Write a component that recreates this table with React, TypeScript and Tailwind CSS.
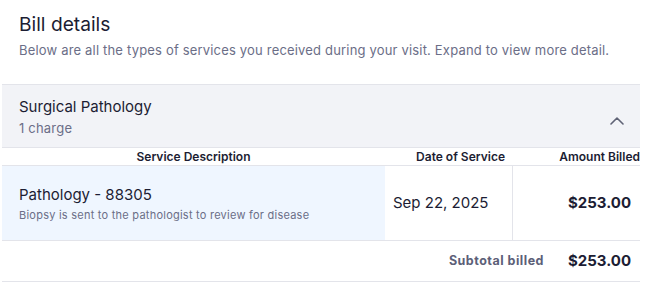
import React from "react";

function ChevronUp() {
  return (
    <svg width="14" height="8" viewBox="0 0 14 8" fill="none" aria-hidden="true">
      <path d="M1 7 L7 1 L13 7" stroke="#5f6275" strokeWidth="1.6" strokeLinecap="round" strokeLinejoin="round" />
    </svg>
  );
}

export default function App() {
  return (
    <div className="w-[661px] h-[284px] bg-white text-[#1c1d33]" style={{ fontFamily: "Inter, 'Noto Sans', sans-serif" }}>
      <div className="pt-[12px] pl-[19px]">
        <h1 className="text-[19.2px] leading-[24px] font-normal">Bill details</h1>
        <p className="mt-[5px] text-[13px] leading-[18px] tracking-[0.18px] text-[#6b6e87]">
          Below are all the types of services you received during your visit. Expand to view more detail.
        </p>
      </div>

      <div className="mt-[25px] ml-[2px] w-[638px]">
        {/* group header */}
        <div className="flex items-center justify-between bg-[#f2f3f7] border-t border-[#e3e4ea] border-b h-[64px] pl-[17px] pr-[16px]">
          <div className="flex flex-col">
            <span className="text-[15px] leading-[20px]">Surgical Pathology</span>
            <span className="mt-[3px] text-[13px] leading-[16px] tracking-[0.2px] text-[#6b6e87]">1 charge</span>
          </div>
          <div className="mt-[10px]">
            <ChevronUp />
          </div>
        </div>

        {/* column headings */}
        <div className="grid grid-cols-[383px_128px_1fr] h-[18px] items-center border-b border-[#e3e4ea] text-[12px] leading-[16px] font-semibold">
          <span className="text-center">Service Description</span>
          <span className="text-right pr-[8px]">Date of Service</span>
          <span className="text-right">Amount Billed</span>
        </div>

        {/* charge row */}
        <div className="grid grid-cols-[383px_128px_1fr] h-[75px] border-b border-[#e3e4ea]">
          <div className="bg-[#eff6ff] flex flex-col justify-center pl-[17px]">
            <span className="text-[15px] leading-[20px]">Pathology - 88305</span>
            <span className="mt-[3px] text-[11px] leading-[14px] tracking-[0.24px] text-[#6b6e87]">Biopsy is sent to the pathologist to review for disease</span>
          </div>
          <div className="flex items-center pl-[8px] border-r border-[#e3e4ea] text-[15px]">Sep 22, 2025</div>
          <div className="flex items-center justify-end pr-[9px] text-[15px] font-bold">$253.00</div>
        </div>

        {/* subtotal */}
        <div className="flex items-center justify-end h-[41px] border-b border-[#e3e4ea] pr-[9px]">
          <span className="text-[12.5px] font-bold tracking-[0.5px] text-[#5c5f78]">Subtotal billed</span>
          <span className="ml-[24px] text-[15px] font-bold">$253.00</span>
        </div>
      </div>
    </div>
  );
}
